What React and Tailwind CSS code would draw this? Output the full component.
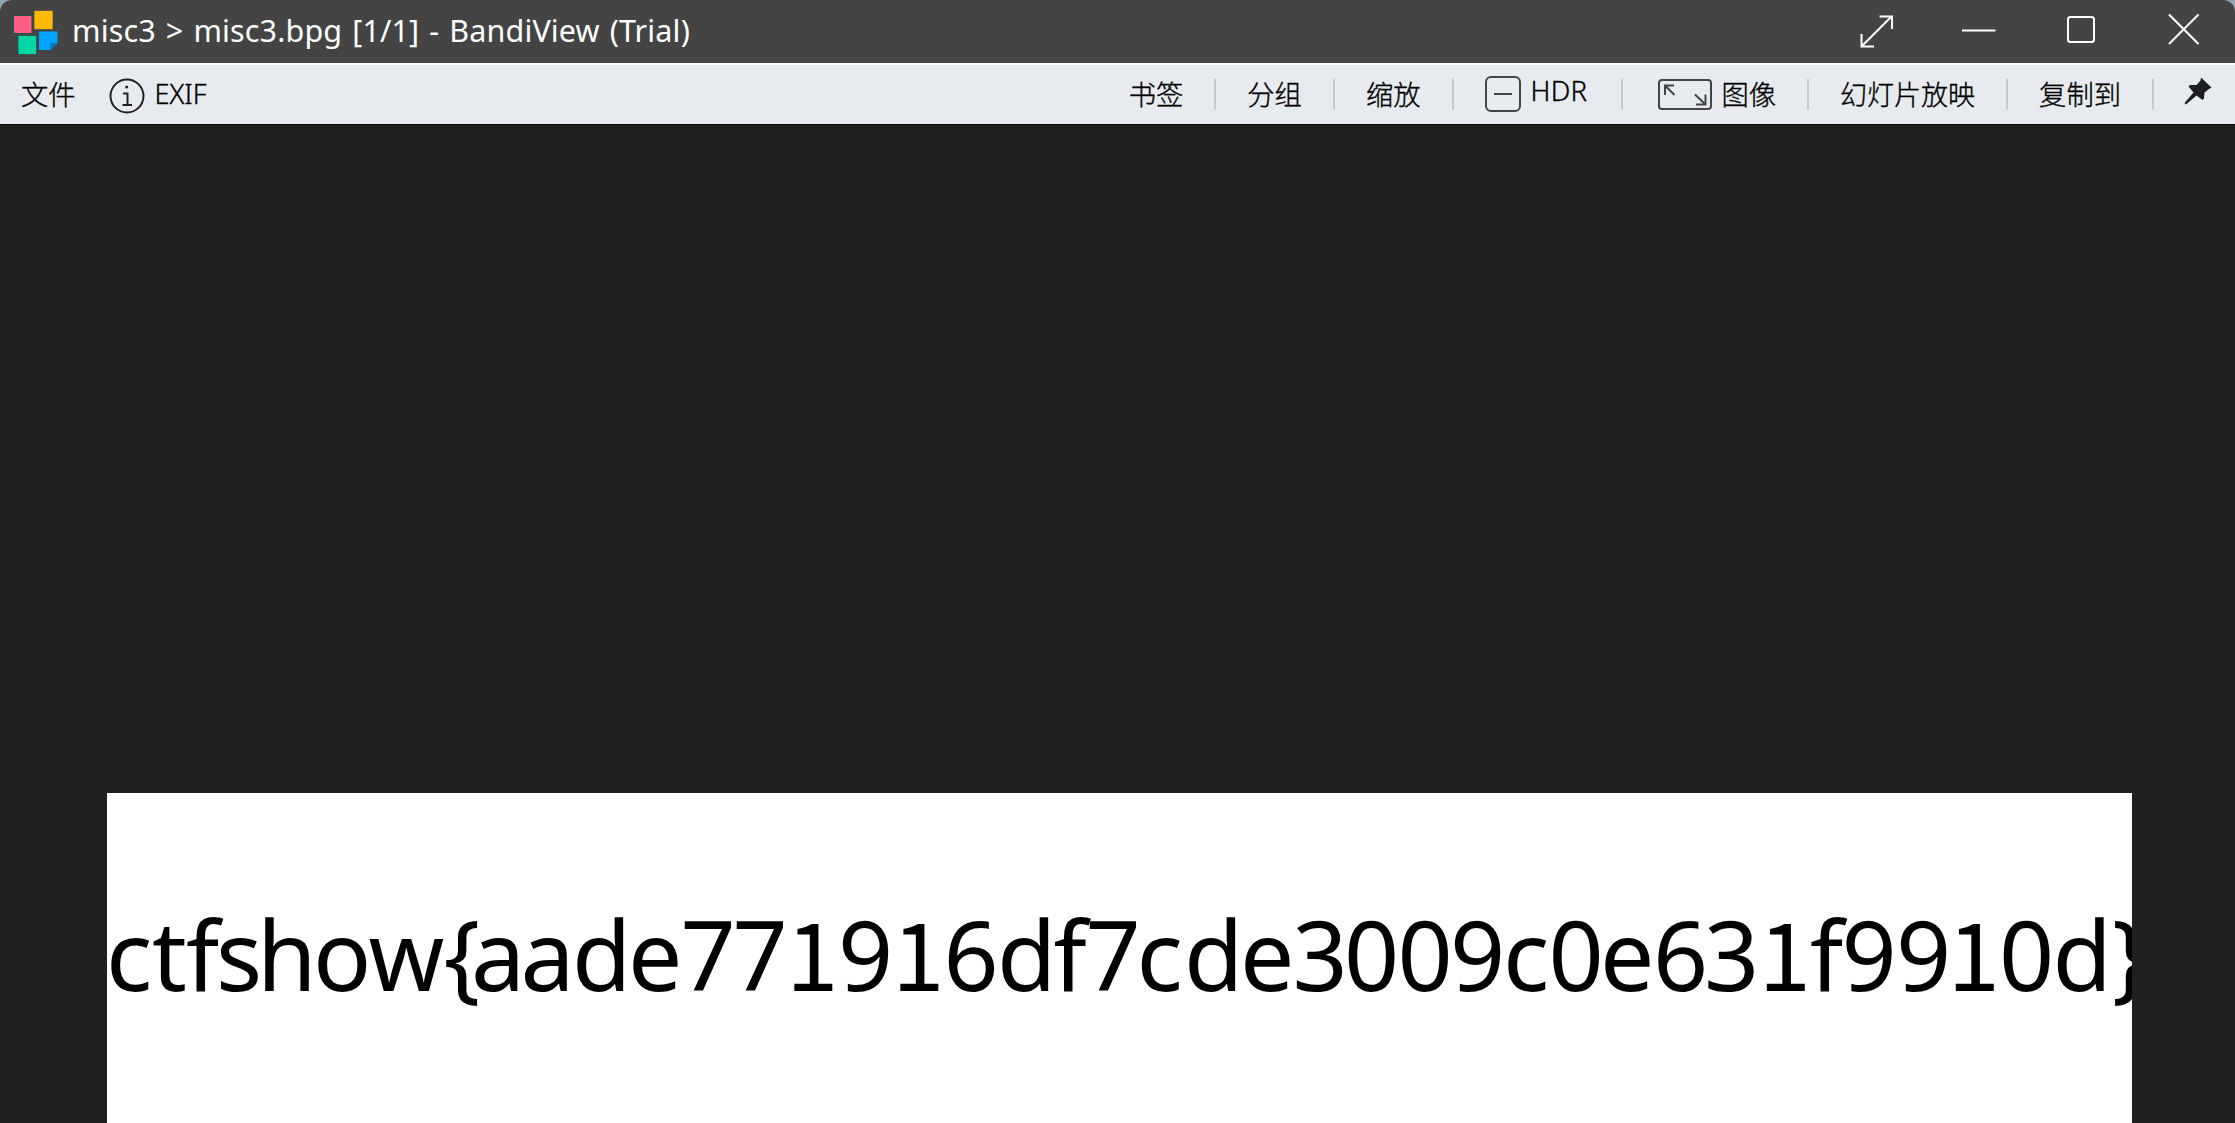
import clsx from "clsx";

// left edge of every glyph in the picture's only line
const flagX =
  "-1 45 79 109 150 206 261.5 336.5 364 413.5 465 521 573.5 625.5 679 731 785 836.5 890 946.5 978.5 1029.5 1077 1133 1185.5 1237 1290.5 1343 1396 1441.5 1493 1546 1597 1651.5 1703 1734.5 1789 1840.5 1892 1945.5 2005";

function Logo() {
  return (
    <svg className="w-[46px] h-[46px]" viewBox="0 0 46 46">
      <rect x="1.5" y="5.5" width="18.5" height="18" fill="#ff5c81" stroke="#1c5750" />
      <rect x="22" y="0.5" width="19" height="19" fill="#ffb900" stroke="#2d3c5a" strokeOpacity=".6" />
      <rect x="6" y="25.5" width="18.5" height="19" fill="#00d6a3" stroke="#4c3038" strokeOpacity=".6" />
      <path d="M27 21.5H45.5V33L38.5 40H27Z" fill="#00a3ff" />
      <path d="M45.5 33H38.5V40Z" fill="#0b77b8" />
    </svg>
  );
}

function Divider({ className }) {
  return <span className={clsx("w-[2px] h-[31px] bg-[#c8c9cb] shrink-0 ml-[31px]", className || "mr-[31px]")} />;
}

// the digit one is taken from the CJK face, which gives it a foot
function One() {
  return <tspan className="font-['Noto_Sans_CJK_SC'] text-[94.5px]">1</tspan>;
}

function TitleBar() {
  return (
    <div className="bg-[#8fa5b1]">
      <header className="flex items-center h-[63px] bg-[#444444] text-white rounded-t-[12px]">
        <div className="ml-3 mt-[3px]"><Logo /></div>
        <h1 className="ml-[14px] mb-[2px] text-[30.5px] leading-none whitespace-pre tracking-[0.15px] [word-spacing:1.9px]">misc3 &gt; misc3.bpg [1/1] - BandiView (Trial)</h1>
        <svg className="ml-auto w-[375px] h-[63px]" viewBox="0 0 375 63" fill="none" stroke="white" strokeWidth="2">
          <path d="M1.5 46.5L31.5 16.5M19.5 16.5H32V29M1.5 34V46.5H14" />
          <path d="M102 30.5H135.5" />
          <rect x="208" y="17" width="26" height="25" rx="2.5" />
          <path d="M309.5 15L338 43.5M338 15L309.5 43.5" strokeLinecap="round" />
        </svg>
      </header>
    </div>
  );
}

function MenuBar() {
  return (
    <nav className="flex items-center h-[62px] bg-[#e7ebf0] text-black text-[27.3px] leading-none font-light [-webkit-text-stroke:0.35px_black] border-t-2 border-white border-b border-b-black">
      <span className="ml-[21px]">文件</span>
      <svg className="ml-[33px] mt-[3px] w-[36px] h-[36px]" viewBox="0 0 36 36" fill="none" stroke="#222" strokeWidth="2">
        <circle cx="18" cy="18" r="16.5" />
        <path d="M14 15.5H18.5V27M13.5 27H23" />
        <circle cx="17.7" cy="9" r="1.5" fill="#222" stroke="none" />
      </svg>
      <span className="ml-[10px] mb-[2px] text-[27px]">EXIF</span>

      <span className="ml-auto">书签</span>
      <Divider />
      <span>分组</span>
      <Divider />
      <span>缩放</span>
      <Divider />
      <svg className="w-[36px] h-[36px] mb-[2px]" viewBox="0 0 36 36" fill="none" stroke="#444" strokeWidth="2">
        <rect x="1" y="1" width="34" height="34" rx="5" />
        <path d="M9 18H27" />
      </svg>
      <span className="ml-[10px] mb-[7px] w-[59px] text-[27.5px] tracking-[0.3px]">HDR</span>
      <Divider className="mr-[35px]" />
      <svg className="w-[54px] h-[31px]" viewBox="0 0 54 31" fill="none" stroke="#444" strokeWidth="2">
        <rect x="1" y="1" width="52" height="29" rx="3" />
        <path d="M7 16V6.5H16M7 6.5L16.5 16M38 25.5H47.5V15.5M37 15.5L47 25" />
      </svg>
      <span className="ml-[10px]">图像</span>
      <Divider />
      <span className="text-[27px]">幻灯片放映</span>
      <Divider />
      <span>复制到</span>
      <Divider className="mr-[30px]" />
      <svg className="w-[28px] h-[28px] mr-[23px] mb-[8px]" viewBox="0 0 28 28">
        <path d="M17 .5L27.5 10.5L25 12L20.5 15.5L20 21.5L18.5 23L12.5 18.5L2 27.5L.5 26L9.500 15.5L4.500 9.500L6 8L12.500 8L16.500 3.500Z" fill="#1d1f22" />
      </svg>
    </nav>
  );
}

export default function App() {
  return (
    <div className="flex flex-col w-[2235px] h-[1123px] overflow-hidden bg-[#202020] font-['Noto_Sans','Noto_Sans_CJK_SC',sans-serif]">
      <TitleBar />
      <MenuBar />
      <main className="flex-1 min-h-0 pl-[107px] pt-[668px]">
        <svg className="w-[2025px] h-[330px] bg-white" viewBox="0 0 2025 330">
          <text x={flagX} y="197.5" className="text-[96.5px]">
            ctfshow&#123;aade77<One />9<One />6df7cde3009c0e63<One />f99<One />0d&#125;
          </text>
        </svg>
      </main>
    </div>
  );
}
